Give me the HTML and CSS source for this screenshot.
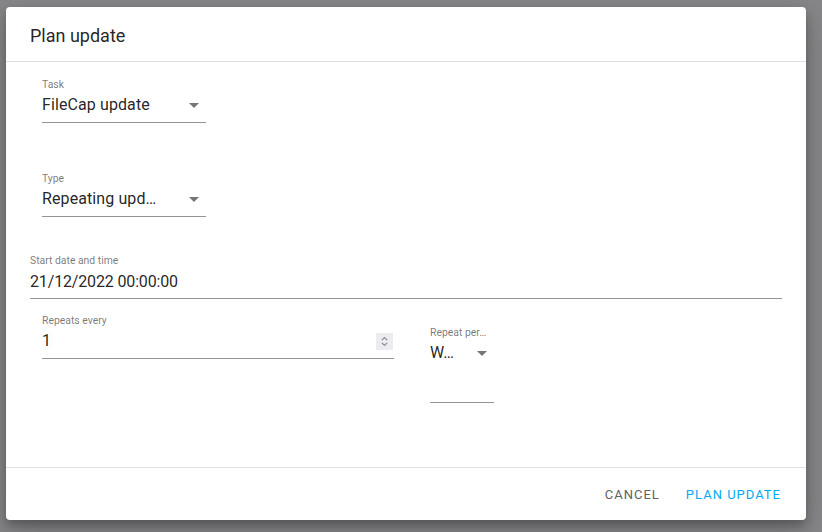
FILE: index.html
```html
<!DOCTYPE html>
<html lang="en">
<head>
<meta charset="utf-8">
<title>Plan update</title>
<link rel="stylesheet" href="styles.css">
</head>
<body>
<div class="dialog">
  <div class="dialog-header">
    <h1 class="dialog-title">Plan update</h1>
  </div>

  <div class="dialog-body">
    <div class="field field-task">
      <div class="field-label">Task</div>
      <div class="field-value select">
        <span class="value-text">FileCap update</span>
        <span class="caret"></span>
      </div>
    </div>

    <div class="field field-type">
      <div class="field-label">Type</div>
      <div class="field-value select">
        <span class="value-text">Repeating upd…</span>
        <span class="caret"></span>
      </div>
    </div>

    <div class="field field-start">
      <div class="field-label">Start date and time</div>
      <div class="field-value">21/12/2022 00:00:00</div>
    </div>

    <div class="repeat-row">
      <div class="field field-every">
        <div class="field-label">Repeats every</div>
        <div class="field-value number">
          <span class="value-text">1</span>
          <span class="spinner">
            <svg width="17" height="17" viewBox="0 0 17 17" aria-hidden="true">
              <path d="M5.8 7.2 L8.5 4.5 L11.2 7.2" fill="none" stroke="#8e8c96" stroke-width="1.2"/>
              <path d="M5.8 9.8 L8.5 12.5 L11.2 9.8" fill="none" stroke="#8e8c96" stroke-width="1.2"/>
            </svg>
          </span>
        </div>
      </div>

      <div class="field field-period">
        <div class="field-label">Repeat per…</div>
        <div class="field-value select tall">
          <span class="value-text">W…</span>
          <span class="caret"></span>
        </div>
      </div>
    </div>
  </div>

  <div class="dialog-footer">
    <button class="btn btn-cancel" type="button">Cancel</button>
    <button class="btn btn-primary" type="button">Plan update</button>
  </div>
</div>
</body>
</html>
```

FILE: styles.css
```css
* {
  box-sizing: border-box;
}

html, body {
  margin: 0;
  padding: 0;
}

body {
  width: 822px;
  height: 532px;
  overflow: hidden;
  background: #868587;
  font-family: Roboto, "Liberation Sans", Arial, sans-serif;
  color: rgba(0, 0, 0, 0.87);
}

.dialog {
  width: 800px;
  height: 513px;
  margin: 7px 0 0 6px;
  background: #fff;
  border-radius: 4px;
  box-shadow: 0 10px 30px rgba(0, 0, 0, 0.19), 0 6px 10px rgba(0, 0, 0, 0.23);
  display: flex;
  flex-direction: column;
}

/* header */
.dialog-header {
  height: 55px;
  border-bottom: 1px solid #e0e0e0;
  padding: 17px 24px 0;
}

.dialog-title {
  margin: 0;
  font-size: 18px;
  font-weight: 400;
  line-height: 24px;
  color: rgba(0, 0, 0, 0.87);
}

/* body */
.dialog-body {
  flex: 1;
  padding: 17px 24px 0;
}

.field-label {
  font-size: 10.4px;
  line-height: 12px;
  color: rgba(0, 0, 0, 0.54);
  white-space: nowrap;
}

.field-value {
  margin-top: 4px;
  font-size: 16px;
  letter-spacing: 0.1px;
  line-height: 20px;
  padding-bottom: 7px;
  border-bottom: 1px solid #949494;
  white-space: nowrap;
}

.select,
.number {
  display: flex;
  align-items: center;
}

.value-text {
  flex: 1;
}

.caret {
  width: 0;
  height: 0;
  border-left: 5px solid transparent;
  border-right: 5px solid transparent;
  border-top: 5px solid #757575;
  margin-right: 7px;
}

.field-task {
  width: 164px;
  margin-left: 12px;
}

.field-type {
  width: 164px;
  margin-left: 12px;
  margin-top: 50px;
}

.field-start {
  margin-top: 38px;
  width: 752px;
}

.field-start .field-value {
  margin-top: 5px;
  padding-bottom: 6px;
  letter-spacing: -0.15px;
}

.repeat-row {
  display: flex;
  align-items: flex-start;
  margin-top: 16px;
  margin-left: 12px;
}

.field-every {
  width: 352px;
}

.spinner {
  width: 17px;
  height: 17px;
  margin-right: 1px;
  background: #ecebf0;
  display: block;
}

.spinner svg {
  display: block;
}

.field-period {
  width: 64px;
  margin-left: 36px;
  margin-top: 12px;
}

.field-value.tall {
  align-items: flex-start;
  padding-bottom: 39px;
}

.field-value.tall .caret {
  margin-top: 8px;
}

/* footer */
.dialog-footer {
  height: 53px;
  border-top: 1px solid #e0e0e0;
  display: flex;
  justify-content: flex-end;
  align-items: center;
  padding: 0 17px 0 0;
  gap: 10px;
}

.btn {
  background: none;
  border: 0;
  padding: 0 8px;
  height: 36px;
  font-family: Roboto, "Liberation Sans", Arial, sans-serif;
  font-size: 13px;
  letter-spacing: 1px;
  text-transform: uppercase;
  cursor: pointer;
}

.btn-cancel {
  color: #616161;
}

.btn-primary {
  color: #03a9f4;
}
```
